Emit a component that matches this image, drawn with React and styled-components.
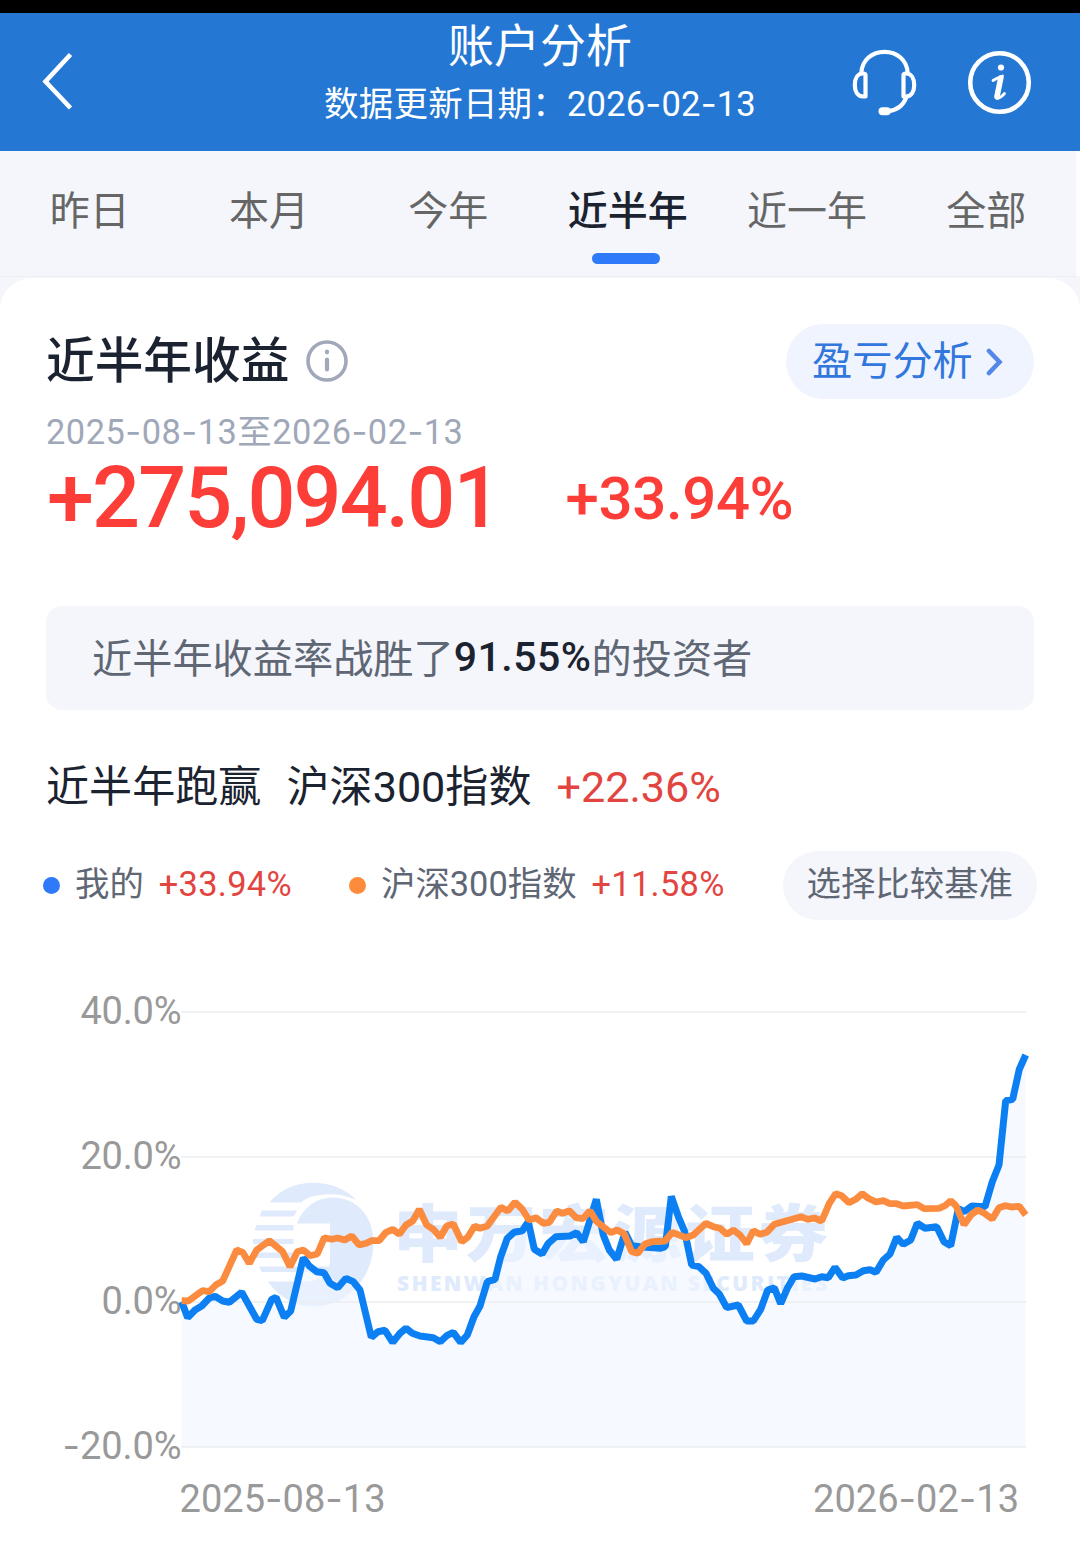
import React from 'react';
import styled, { createGlobalStyle } from 'styled-components';

const FONT = `Roboto, 'Noto Sans CJK SC', sans-serif`;

const GlobalStyle = createGlobalStyle`
  * { box-sizing: border-box; }
  body { margin: 0; background: #f4f6fb; font-family: ${FONT}; }
`;

const Page = styled.div`
  width: 1080px;
  height: 1563px;
  overflow: hidden;
  display: flex;
  flex-direction: column;
  background: #f4f6fb;
`;

const StatusBar = styled.div`
  flex: none;
  height: 13px;
  background: #000;
`;

const Header = styled.header`
  flex: none;
  height: 138px;
  display: grid;
  grid-template-columns: 300px 1fr 300px;
  background: #2577d4;
  color: #fff;
`;

const HeaderSide = styled.div`
  display: flex;
  align-items: center;
  gap: 48px;
  justify-content: ${(p) => (p.$end ? 'flex-end' : 'flex-start')};
  padding: ${(p) => (p.$end ? '0 48px 0 0' : '0 0 2px 40px')};
`;

const HeaderTitles = styled.div`
  display: flex;
  flex-direction: column;
  align-items: center;
  white-space: nowrap;
`;

const Title = styled.h1`
  margin: 3px 0 0;
  font-size: 46px;
  font-weight: 400;
  line-height: 60px;
`;

const Subtitle = styled.div`
  font-size: 34.5px;
  line-height: 56px;
  letter-spacing: 0.2px;
`;

const DashMark = styled.span`
  font-family: Inter, sans-serif;
`;

const Tabs = styled.nav`
  flex: none;
  height: 126px;
  display: grid;
  grid-template-columns: repeat(6, 1fr);
  border-right: 4px solid #fdfdfe;
  border-bottom: 1px solid #eeeff3;
`;

const Tab = styled.div`
  display: flex;
  flex-direction: column;
  align-items: center;
  padding-top: 33px;
  font-size: 40px;
  line-height: 56px;
  font-weight: ${(p) => (p.$active ? 500 : 400)};
  color: ${(p) => (p.$active ? '#1b2230' : '#666')};

  &::after {
    content: '';
    width: 68px;
    height: 11px;
    margin: 13px 3px 0 0;
    border-radius: 6px;
    background: ${(p) => (p.$active ? '#2f7af8' : 'transparent')};
  }
`;

const Card = styled.main`
  flex: 1;
  margin-top: 1px;
  padding-top: 46px;
  border-radius: 32px 32px 0 0;
  background: #fff;
`;

const TitleRow = styled.div`
  display: flex;
  align-items: center;
  height: 75px;
  padding: 0 46px;
  gap: 17px;
`;

const SectionTitle = styled.h2`
  margin: 0;
  font-size: 48.7px;
  font-weight: 500;
  line-height: 60px;
  color: #1b2230;
`;

const AnalysisButton = styled.button`
  display: flex;
  align-items: center;
  gap: 13px;
  width: 248px;
  height: 75px;
  margin-left: auto;
  padding: 0 0 0 26px;
  border: 0;
  border-radius: 38px;
  background: #eff4ff;
  color: #3277dc;
  font: 400 40.2px/60px ${FONT};
`;

const Period = styled.div`
  height: 40px;
  margin-top: 13px;
  padding: 0 46px;
  font-size: 34.4px;
  line-height: 40px;
  letter-spacing: 0.5px;
  color: #9fa8b8;
`;

const AmountRow = styled.div`
  display: flex;
  align-items: center;
  height: 94px;
  padding: 0 47px;
  gap: 66px;
  font-weight: 500;
  line-height: 94px;
  color: #fd3d37;
`;

const Amount = styled.span`
  font-size: 84.5px;
  letter-spacing: -1.9px;
`;

const Rate = styled.span`
  font-size: 60px;
  letter-spacing: -0.4px;
`;

const Banner = styled.div`
  display: flex;
  align-items: center;
  height: 104px;
  margin: 60px 46px 0;
  padding: 0 46px 5px;
  border-radius: 16px;
  background: #f4f6fb;
  font-size: 40.2px;
  color: #5f6775;

  strong {
    padding-top: 2px;
    font-size: 41px;
    font-weight: 500;
    letter-spacing: 0.5px;
    color: #1b2230;
  }
`;

const CompareRow = styled.div`
  display: flex;
  align-items: center;
  height: 60px;
  margin-top: 48px;
  padding: 0 46px;
  gap: 25px;
  font-size: 43.1px;
  line-height: 60px;
  color: #1b2230;
`;

const Gain = styled.span`
  color: #e2443f;
`;

const LegendRow = styled.div`
  display: flex;
  align-items: center;
  height: 69px;
  margin-top: 33px;
  padding: 0 43.5px 0 43px;
`;

const LegendItem = styled.div`
  display: flex;
  align-items: center;
  width: ${(p) => p.$width}px;
  font-size: 34.4px;
  line-height: 60px;
  padding-bottom: 3px;
  color: #5f6775;
  white-space: nowrap;

  &::before {
    content: '';
    width: 17px;
    height: 17px;
    margin: 3px 15px 0 0;
    border-radius: 50%;
    background: ${(p) => p.$color};
  }

  ${Gain} {
    margin-left: 15px;
    letter-spacing: 0.3px;
  }
`;

const BaselineButton = styled.button`
  width: 253.5px;
  height: 69px;
  margin-left: auto;
  padding: 0 0 4px;
  border: 0;
  border-radius: 35px;
  background: #f4f6fb;
  color: #5f6775;
  font: 400 34.4px/60px ${FONT};
`;

const ChartSvg = styled.svg`
  display: block;
  font-family: ${FONT};
`;

const Dashed = ({ children }) =>
  children.split(/(-)/).map((part, i) => (part === '-' ? <DashMark key={i}>-</DashMark> : part));

const BackIcon = () => (
  <svg width="36" height="60" viewBox="40 51 36 60" fill="none" stroke="#fff" strokeWidth="4.6">
    <path d="M70.500 54.500 45.500 81.500 70.500 108" />
  </svg>
);

const HeadsetIcon = () => (
  <svg width="68" height="70" viewBox="850 47 68 70" fill="none" stroke="#fff" strokeWidth="4.2" strokeLinejoin="round" strokeLinecap="round">
    <path d="M861.300 73C862 60 872 51.800 884.500 51.800S907 60 907.700 73" />
    <path d="M865.500 75V96.500H863C857.500 96.500 854.800 91.500 854.800 85S857.500 73.500 863 73.500Q865.500 73.500 865.500 75Z" />
    <path d="M903.500 75V96.500H906C911.500 96.500 914.200 91.500 914.200 85S911.500 73.500 906 73.500Q903.500 73.500 903.500 75Z" />
    <path d="M906.500 97C903 106 896 110.500 888 111" />
    <path d="M882.500 111.200H886.800" strokeWidth="8" />
  </svg>
);

const HeaderInfoIcon = () => (
  <svg width="66" height="66" viewBox="966 49 66 66" fill="none" stroke="#fff">
    <circle cx="999.500" cy="82.500" r="29.300" strokeWidth="4.600" />
    <circle cx="1001" cy="67.500" r="3.100" fill="#fff" stroke="none" />
    <path d="M993 80.500Q997 78 1002.500 76M997 98.500Q1000 98.500 1004.500 93.500" strokeWidth="2.800" strokeLinejoin="round" strokeLinecap="round" />
    <path d="M1000.800 78 997 96.500" strokeWidth="5.600" strokeLinecap="round" />
  </svg>
);

const InfoIcon = () => (
  <svg width="42" height="44" viewBox="0 0 42 44" fill="none" stroke="#a0a8ba">
    <circle cx="21" cy="21" r="19" strokeWidth="3.600" />
    <path d="M21 11.700V12.300M21 19.500V29.500" strokeWidth="4.200" strokeLinecap="round" />
  </svg>
);

const ChevronIcon = () => (
  <svg width="18" height="30" viewBox="986 346.500 18 30" fill="none" stroke="#5388e8" strokeWidth="4.600" strokeLinecap="round">
    <path d="M989 350.500 999.500 361.500 989 372.500" />
  </svg>
);

// Each stretch of a series is [originX, originY, points], three units to a pixel.
const toPoints = (stretches) =>
  stretches
    .flatMap(([ox, oy, pts]) => pts.map(([x, y]) => `${(ox + x / 3).toFixed(1)},${(oy + y / 3).toFixed(1)}`))
    .join(' ');

const MINE = toPoints([
  [170, 1170, [[35, 395], [53, 443], [75, 420], [95, 408], [118, 384], [135, 379], [158, 393], [178, 397], [215, 367], [260, 448], [277, 452], [305, 388], [318, 382], [343, 442], [362, 423], [400, 263], [418, 288], [440, 305], [462, 308], [480, 340], [503, 353], [528, 325], [550, 335], [570, 360], [604, 502], [624, 485], [645, 481], [668, 517], [690, 490], [708, 475], [727, 490], [750, 498], [790, 503], [811, 515], [830, 497], [850, 487], [872, 517], [892, 495], [912, 440]]],
  [480, 1170, [[0, 408], [22, 335], [45, 328], [62, 260], [82, 205], [102, 187], [127, 182], [145, 155], [163, 238], [186, 252], [205, 220], [228, 200], [270, 198], [290, 188], [310, 215], [333, 140], [349, 88], [370, 195], [388, 240], [410, 268], [435, 187], [455, 227], [480, 230], [500, 232], [540, 235], [556, 230], [574, 79], [595, 140], [614, 185], [635, 285], [657, 290], [678, 310], [700, 355], [718, 372], [740, 413], [775, 405]]],
  [740, 1040, [[20, 843], [40, 843], [62, 808], [83, 750], [103, 743], [122, 791], [142, 745], [162, 710], [185, 708], [225, 717], [245, 710], [265, 713], [285, 682], [308, 714], [325, 707], [348, 705], [370, 692], [390, 689], [408, 697], [430, 660], [450, 642], [470, 592], [490, 613], [512, 600], [532, 550], [555, 565], [590, 560], [612, 605], [632, 617], [655, 506], [672, 515], [695, 498], [735, 500], [757, 425], [777, 375], [797, 182], [818, 178], [838, 88], [857, 45]]],
]);

const INDEX = toPoints([
  [170, 1170, [[35, 392], [55, 393], [97, 362], [118, 365], [137, 345], [158, 333], [200, 240], [218, 247], [238, 280], [260, 240], [298, 212], [338, 245], [360, 290], [382, 245], [400, 240], [420, 257], [442, 252], [463, 203], [485, 208], [503, 204], [524, 210], [545, 198], [568, 225], [588, 220], [605, 212], [627, 212], [648, 187], [668, 178], [688, 193], [708, 165], [728, 153], [748, 118], [770, 165], [790, 178], [811, 202], [830, 168], [850, 162], [875, 215], [893, 202], [914, 168]]],
  [480, 1170, [[0, 175], [22, 168], [42, 140], [63, 112], [83, 123], [105, 97], [127, 118], [147, 150], [168, 143], [190, 160], [208, 157], [230, 123], [248, 130], [268, 122], [288, 143], [308, 146], [330, 122], [350, 155], [392, 188], [412, 180], [433, 192], [455, 245], [473, 250], [495, 222], [515, 215], [555, 213], [577, 187], [617, 203], [640, 195], [678, 160], [700, 170], [720, 175], [740, 193], [760, 180]]],
  [740, 1040, [[0, 585], [20, 611], [40, 572], [60, 583], [80, 577], [103, 553], [183, 530], [203, 538], [223, 534], [245, 543], [268, 490], [287, 461], [305, 467], [327, 488], [347, 478], [367, 461], [385, 475], [408, 486], [430, 482], [450, 491], [470, 491], [490, 498], [532, 494], [552, 506], [597, 505], [615, 497], [632, 482], [648, 497], [672, 554], [693, 525], [713, 510], [733, 520], [757, 537], [777, 503], [795, 497], [815, 501], [838, 499], [857, 525]]],
]);

const Y_AXIS = [
  { y: 1012, label: '40.0%', width: 101 },
  { y: 1157, label: '20.0%', width: 101 },
  { y: 1302, label: '0.0%', width: 80 },
  { y: 1447, label: '-20.0%', width: 119 },
];

const AxisText = ({ x, y, width, children }) => (
  <text x={x} y={y} fontSize="38" fill="#999" textLength={width}>
    {children.split(/(-)/).map((part, i) =>
      part === '-' ? (
        <tspan key={i} fontFamily="Inter">-</tspan>
      ) : (
        part
      ),
    )}
  </text>
);

const Watermark = () => (
  <g fill="#dfeafc">
    <path d="M269.500 1202.500C281 1189 296 1182.700 313 1182.700C330 1182.700 346 1189 356.500 1200C340 1192.500 323 1193 310 1197Q304 1199.500 301 1202.500Z" />
    <path d="M262 1210.500H297L293.500 1216.500H259.500Z" />
    <path d="M256.500 1225H293.500V1230.500H254.500Z" />
    <path d="M253 1239H293.500V1244H253Z" />
    <path d="M254.500 1252.500H293.500V1258H256Z" />
    <path d="M259 1266.500H330L327 1272H261.500Z" />
    <path d="M297 1223.500C304 1206 318 1197.500 333 1197.500C357 1197.500 373.500 1217 373.500 1242C373.500 1278 347 1306.500 313 1306.500C294 1306.500 278 1296 268 1281.500H306C320 1281.500 330 1273 330 1260V1223.500Z" />
    <text transform="translate(393 1256.500) scale(1.130 1)" fontSize="62" fontWeight="900" textLength="385">申万宏源证券</text>
    <text x="397" y="1291" fontSize="21" fontWeight="800" fontFamily="Open Sans" textLength="430">SHENWAN HONGYUAN SECURITIES</text>
  </g>
);

const ReturnChart = () => (
  <ChartSvg width="1080" height="643" viewBox="0 920 1080 643">
    <Watermark />
    <polygon points={`181.500,1447 ${MINE} 1025.700,1447`} fill="#f0f6ff" fillOpacity="0.62" />
    {Y_AXIS.map(({ y, label, width }) => (
      <React.Fragment key={label}>
        <path d={`M181 ${y}H1026`} stroke="#ebecee" strokeWidth="1.500" />
        <AxisText x={181.500 - width} y={y + 12} width={width}>{label}</AxisText>
      </React.Fragment>
    ))}
    <AxisText x={179.500} y={1511.500} width={206}>2025-08-13</AxisText>
    <AxisText x={813} y={1511.500} width={206}>2026-02-13</AxisText>
    <polyline points={MINE} fill="none" stroke="#0c80f3" strokeWidth="7" strokeLinejoin="bevel" />
    <polyline points={INDEX} fill="none" stroke="#fb8c3f" strokeWidth="6.800" strokeLinejoin="bevel" />
  </ChartSvg>
);

const TABS = ['昨日', '本月', '今年', '近半年', '近一年', '全部'];

export default function App() {
  return (
    <Page>
      <GlobalStyle />
      <StatusBar />
      <Header>
        <HeaderSide>
          <BackIcon />
        </HeaderSide>
        <HeaderTitles>
          <Title>账户分析</Title>
          <Subtitle>数据更新日期：<Dashed>2026-02-13</Dashed></Subtitle>
        </HeaderTitles>
        <HeaderSide $end>
          <HeadsetIcon />
          <HeaderInfoIcon />
        </HeaderSide>
      </Header>
      <Tabs>
        {TABS.map((name) => (
          <Tab key={name} $active={name === '近半年'}>{name}</Tab>
        ))}
      </Tabs>
      <Card>
        <TitleRow>
          <SectionTitle>近半年收益</SectionTitle>
          <InfoIcon />
          <AnalysisButton>
            盈亏分析
            <ChevronIcon />
          </AnalysisButton>
        </TitleRow>
        <Period><Dashed>2025-08-13至2026-02-13</Dashed></Period>
        <AmountRow>
          <Amount>+275,094.01</Amount>
          <Rate>+33.94%</Rate>
        </AmountRow>
        <Banner>近半年收益率战胜了<strong>91.55%</strong>的投资者</Banner>
        <CompareRow>
          <span>近半年跑赢</span>
          <span>沪深300指数</span>
          <Gain>+22.36%</Gain>
        </CompareRow>
        <LegendRow>
          <LegendItem $color="#2f7af8" $width={306}>我的<Gain>+33.94%</Gain></LegendItem>
          <LegendItem $color="#fc8b3b" $width={380}>沪深300指数<Gain>+11.58%</Gain></LegendItem>
          <BaselineButton>选择比较基准</BaselineButton>
        </LegendRow>
        <ReturnChart />
      </Card>
    </Page>
  );
}
